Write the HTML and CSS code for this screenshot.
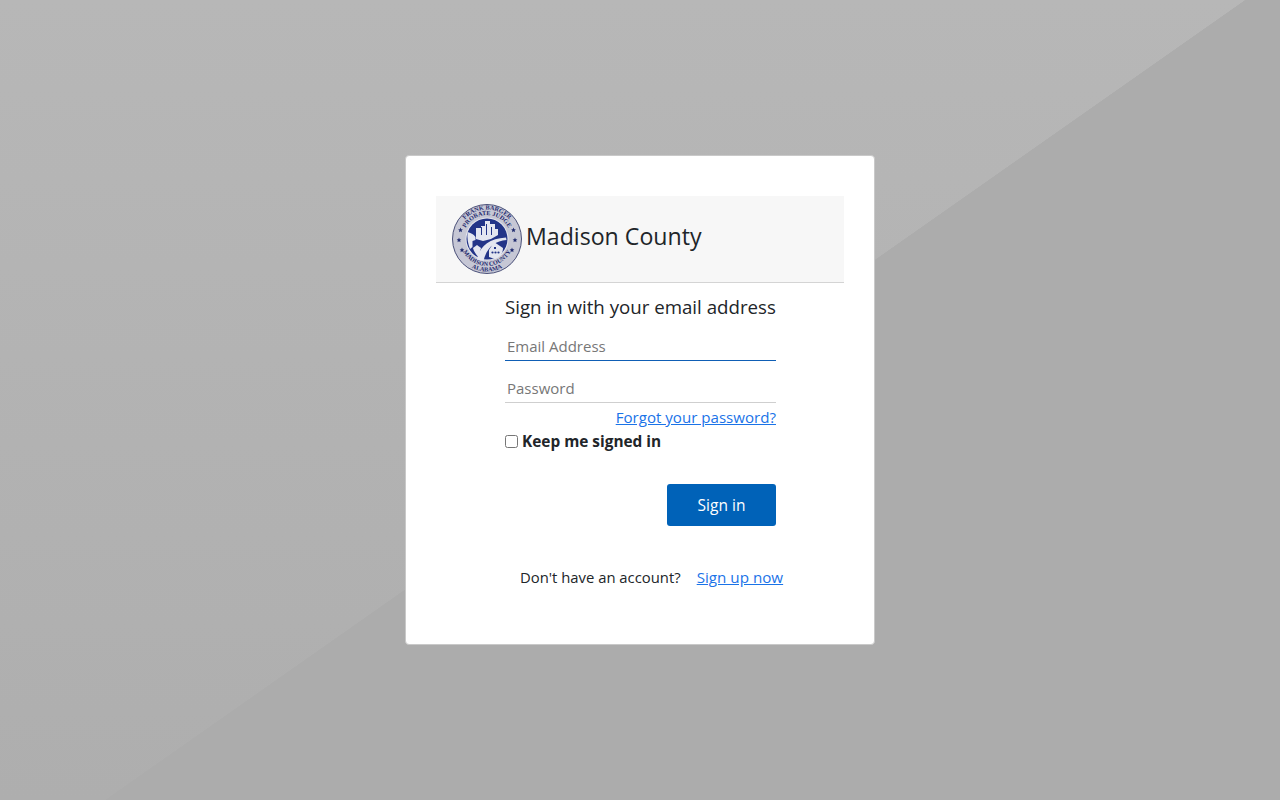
FILE: index.html
```html
<!DOCTYPE html>
<html lang="en">
<head>
    <meta charset="UTF-8">
    <meta name="viewport" content="width=device-width, initial-scale=1.0">
    <title>Madison County - Sign in</title>
    <link rel="stylesheet" href="styles.css">
</head>
<body>
    <div class="card">
        <div class="card-header">
            <svg class="seal" viewBox="0 0 70 70" role="img" aria-label="Madison County seal">
                <defs>
                    <path id="arc-top-outer" d="M5.500 35a29.500 29.500 0 0 1 59 0"/>
                    <path id="arc-top-inner" d="M11 35a24 24 0 0 1 48 0"/>
                    <path id="arc-bottom-outer" d="M8 35a27 27 0 0 0 54 0"/>
                    <path id="arc-bottom-inner" d="M2.500 35a32.500 32.500 0 0 0 65 0"/>
                    <path id="star" d="M0-2.400l.7 1.600 1.700.2-1.300 1.100.4 1.700-1.500-.9-1.500.9.4-1.700-1.300-1.100 1.700-.2z"/>
                </defs>
                <circle cx="35" cy="35" r="34.500" fill="#c6c7d5" stroke="#4a5078" stroke-width="1"/>
                <circle cx="35" cy="35" r="21.500" fill="#e6e7ee"/>
                <circle cx="35" cy="35" r="20.500" fill="#233488"/>
                <text class="seal-text">
                    <textPath href="#arc-top-outer" startOffset="50%">FRANK BARGER</textPath>
                    <textPath href="#arc-top-inner" startOffset="50%">PROBATE JUDGE</textPath>
                </text>
                <text class="seal-text">
                    <textPath href="#arc-bottom-outer" startOffset="50%">MADISON COUNTY</textPath>
                    <textPath href="#arc-bottom-inner" startOffset="50%">ALABAMA</textPath>
                </text>
                <g fill="#1f2a6e">
                    <use href="#star" x="8.500" y="26"/>
                    <use href="#star" x="61.500" y="26"/>
                    <use href="#star" x="7" y="36"/>
                    <use href="#star" x="63" y="36"/>
                    <use href="#star" x="10" y="46"/>
                    <use href="#star" x="60" y="46"/>
                </g>
                <g fill="#e4e6f0">
                    <path d="M24 24h5v-2h4v-5h5v3h5v5h3v6l-7 4-8 2-7-2z"/>
                    <path d="M15.500 28c3 1 6 2 8 5v3l-3 1v6l-2.500 2c-2-5-3-11-2.500-17z"/>
                    <path d="M21 44l4-3 4 3-2.500 9c-2-2-4.500-5-5.500-9z"/>
                    <path d="M25 55.500c2-12 11-21 29-22l.5 2.500c-12 1-20 8-23 21z"/>
                    <path d="M37 53v-7l5-8 9 6c0 3-1 5-2 7-2 2-4 3-6 4z"/>
                </g>
                <g fill="#233488">
                    <path d="M29 23h1v8h-1zM34 20h1v11h-1zM39 23h1v8h-1z"/>
                    <circle cx="40.500" cy="48.500" r="1.100"/>
                    <circle cx="43.500" cy="48.500" r="1.100"/>
                    <circle cx="46.500" cy="48.500" r="1.100"/>
                    <rect x="42" y="43" width="2" height="2"/>
                </g>
            </svg>
            <h1 class="org-name">Madison County</h1>
        </div>

        <form class="signin-form">
            <h2 class="form-title">Sign in with your email address</h2>
            <input class="field field-focus" type="email" placeholder="Email Address">
            <input class="field" type="password" placeholder="Password">
            <div class="forgot-row"><a href="#">Forgot your password?</a></div>
            <label class="keep-row"><input type="checkbox"> <span>Keep me signed in</span></label>
            <div class="button-row"><button class="signin-button" type="button">Sign in</button></div>
        </form>

        <div class="signup-row">
            <span>Don't have an account?</span>
            <a class="signup-link" href="#">Sign up now</a>
        </div>
    </div>
</body>
</html>
```

FILE: styles.css
```css
html, body {
    height: 100%;
}
body {
    display: flex;
    align-items: center;
    justify-content: center;
    margin: 0;
    font-family: "Open Sans", "Noto Sans", sans-serif;
    color: #212529;
    background-color: #acacac;
    background-image:
        linear-gradient(144.94deg, transparent 715px, #acacac 715.5px),
        linear-gradient(180deg, #b7b7b7 0, #aeaeae 100%);
}
a {
    color: #1a73e8;
}
.card {
    box-sizing: border-box;
    width: 470px;
    height: 490px;
    padding: 40px 30px 0;
    background-color: #fff;
    border: 1px solid #c9c9c9;
    border-radius: 4px;
}
.card-header {
    display: flex;
    align-items: flex-start;
    box-sizing: border-box;
    height: 87px;
    padding: 8px 16px 0;
    background-color: #f7f7f7;
    border-bottom: 1px solid #d4d4d4;
}
.seal {
    width: 70px;
    height: 70px;
    flex: none;
}
.seal-text {
    font-family: "Liberation Serif", serif;
    font-size: 6.200px;
    font-weight: 700;
    text-anchor: middle;
    fill: #1f2a6e;
}
.org-name {
    margin: 16px 0 0 4px;
    font-size: 23.150px;
    font-weight: 400;
    line-height: 32px;
}
.signin-form {
    width: 271px;
    margin-left: 69px;
}
.form-title {
    margin: 9px 0 0;
    font-size: 18.700px;
    font-weight: 400;
    line-height: 30px;
    white-space: nowrap;
}
.field {
    display: block;
    box-sizing: border-box;
    width: 100%;
    height: 30px;
    padding: 0 2px;
    margin-top: 12px;
    font-family: inherit;
    font-size: 15px;
    color: #212529;
    background: transparent;
    border: 0;
    border-bottom: 1px solid #cfcfcf;
    outline: 0;
}
.field::placeholder {
    color: #777;
    opacity: 1;
}
.field-focus {
    margin-top: 9px;
    border-bottom-color: #0f5eb5;
}
.forgot-row {
    margin-top: 2px;
    font-size: 15.100px;
    line-height: 24px;
    text-align: right;
}
.keep-row {
    display: flex;
    align-items: center;
    height: 24px;
    font-size: 15.400px;
    font-weight: 700;
}
.keep-row input {
    width: 13px;
    height: 13px;
    margin: 0 4px 0 0;
}
.button-row {
    display: flex;
    justify-content: flex-end;
    margin-top: 31px;
}
.signin-button {
    width: 109px;
    height: 42px;
    padding: 0;
    font-family: inherit;
    font-size: 15.500px;
    color: #fff;
    background-color: #0062b8;
    border: 0;
    border-radius: 3px;
}
.signup-row {
    display: flex;
    gap: 16px;
    margin: 39px 0 0 84px;
    font-size: 14.850px;
    line-height: 24px;
    white-space: nowrap;
}
.signup-link {
    font-size: 15.200px;
}
```
